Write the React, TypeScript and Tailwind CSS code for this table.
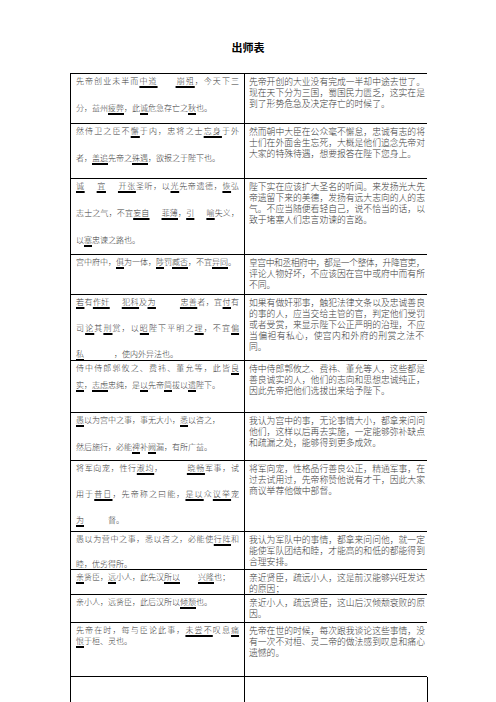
import React from "react";

type Seg = { t: string; u?: boolean; g?: number };

// "[..]" = underlined blank, "~" = one gap unit, leading "=" = justified line
const parse = (s: string): Seg[] => {
  const segs: Seg[] = [];
  const re = /\[([^\]]+)\]|(~+)|([^[~]+)/g;
  let m: RegExpExecArray | null;
  while ((m = re.exec(s))) {
    if (m[1]) segs.push({ t: m[1], u: true });
    else if (m[2]) segs.push({ t: "", g: m[2].length });
    else segs.push({ t: m[3] });
  }
  return segs;
};

type Row = { h: number; lp: number; left: string[]; right: string[] };

const rows: Row[] = [
  {
    h: 50,
    lp: 27,
    left: ["=先帝创业未半而[中道]~~~[崩殂]，今天下三", "分，益州[疲弊]，此[诚]危急存亡之[秋]也。"],
    right: [
      "=先帝开创的大业没有完成一半却中途去世了。",
      "=现在天下分为三国，蜀国民力匮乏，这实在是",
      "到了形势危急及决定存亡的时候了。",
    ],
  },
  {
    h: 55,
    lp: 27,
    left: ["=然侍卫之臣不[懈]于内，忠将之士[忘身]于外", "者，[盖追]先帝之[殊遇]，欲报之于陛下也。"],
    right: [
      "=然而朝中大臣在公众毫不懈怠，忠诚有志的将",
      "=士们在外面舍生忘死，大概是他们追念先帝对",
      "大家的特殊待遇，想要报答在陛下您身上。",
    ],
  },
  {
    h: 76,
    lp: 27,
    left: [
      "=[诚]~~[宜]~~[开张]圣听，以[光]先帝遗德，[恢]弘",
      "=志士之气，不宜[妄自]~~[菲薄]，[引]~~[喻]失义，",
      "以[塞]忠谏之路也。",
    ],
    right: [
      "=陛下实在应该扩大圣名的听闻。来发扬光大先",
      "=帝遗留下来的美德，发扬有远大志向的人的志",
      "=气。不应当随便看轻自己，说不恰当的话，以",
      "致于堵塞人们忠言劝谏的言路。",
    ],
  },
  {
    h: 40,
    lp: 27,
    left: ["宫中府中，[俱]为一体，[陟]罚[臧否]，不宜[异同]。"],
    right: [
      "!皇宫中和丞相府中，都是一个整体，升降官吏，",
      "=评论人物好坏，不应该因在宫中或府中而有所",
      "不同。",
    ],
  },
  {
    h: 66,
    lp: 26,
    left: [
      "=[若]有[作奸]~~[犯科]及[为]~~~~[忠善]者，宜[付]有",
      "=司[论]其[刑]赏，以[昭]陛下平明之[理]，不宜[偏]",
      "[私]~~~~~，使内外异法也。",
    ],
    right: [
      "=如果有做奸邪事，触犯法律文条以及忠诚善良",
      "=的事的人，应当交给主管的官，判定他们受罚",
      "=或者受赏，来显示陛下公正严明的治理，不应",
      "=当偏袒有私心，使宫内和外府的刑赏之法不",
      "同。",
    ],
  },
  {
    h: 52,
    lp: 17,
    left: ["=侍中侍郎郭攸之、费祎、董允等，此皆[良]", "[实]，[志虑]忠纯，是[以]先帝[简]拔以[遗]陛下。"],
    right: [
      "=侍中侍郎郭攸之、费祎、董允等人，这些都是",
      "=善良诚实的人，他们的志向和思想忠诚纯正，",
      "因此先帝把他们选拔出来给予陛下。",
    ],
  },
  {
    h: 48,
    lp: 27,
    left: ["[愚]以为宫中之事，事无大小，[悉]以咨之，", "然后施行，必能[裨]补[阙]漏，有所广益。"],
    right: [
      "=我认为宫中的事，无论事情大小，都拿来问问",
      "=他们，这样以后再去实施，一定能够弥补缺点",
      "和疏漏之处，能够得到更多成效。",
    ],
  },
  {
    h: 71,
    lp: 26,
    left: [
      "=将军向宠，性行[淑均]，~~~~[晓畅]军事，试",
      "=用于[昔日]，先帝称之曰能，[是以]众[议举]宠",
      "[为]~~~~督。",
    ],
    right: [
      "=将军向宠，性格品行善良公正，精通军事，在",
      "=过去试用过，先帝称赞他说有才干，因此大家",
      "商议举荐他做中部督。",
    ],
  },
  {
    h: 38,
    lp: 25,
    left: ["=愚以为营中之事，悉以咨之，必能使[行阵]和", "睦，优劣得所。"],
    right: [
      "=我认为军队中的事情，都拿来问问他，就一定",
      "=能使军队团结和睦，才能高的和低的都能得到",
      "合理安排。",
    ],
  },
  {
    h: 25,
    lp: 12,
    left: ["[亲]贤臣，[远]小人，此先汉[所以]~~~[兴隆]也；"],
    right: ["=亲近贤臣，疏远小人，这是前汉能够兴旺发达", "的原因；"],
  },
  {
    h: 28,
    lp: 12,
    left: ["亲小人，远贤臣，此后汉所以[倾颓]也。"],
    right: ["=亲近小人，疏远贤臣，这山后汉倾颓衰败的原", "因。"],
  },
  {
    h: 54,
    lp: 11,
    left: ["=先帝在时，每与臣论此事，[未尝不]叹息[痛]", "[恨]于桓、灵也。"],
    right: [
      "=先帝在世的时候，每次跟我谈论这些事情，没",
      "=有一次不对桓、灵二帝的做法感到叹息和痛心",
      "遗憾的。",
    ],
  },
];

const Segs = ({ text }: { text: string }) => (
  <>
    {parse(text).map((s, i) =>
      s.g ? (
        <span key={i} className="inline-block" style={{ width: s.g * 6 }} />
      ) : s.u ? (
        <span
          key={i}
          className="underline decoration-black decoration-2 underline-offset-[2px]"
        >
          {s.t}
        </span>
      ) : (
        <span key={i}>{s.t}</span>
      )
    )}
  </>
);

const LeftLine = ({ text, lp, last }: { text: string; lp: number; last: boolean }) => {
  const justify = text.startsWith("=");
  const body = justify ? text.slice(1) : text;
  return (
    <div
      className={`whitespace-nowrap leading-[11px] ${
        justify ? "text-justify [text-align-last:justify]" : ""
      }`}
      style={{ height: last ? 11 : lp }}
    >
      <Segs text={body} />
    </div>
  );
};

const RightLine = ({ text }: { text: string }) => {
  const justify = text.startsWith("=");
  const tight = text.startsWith("!");
  const body = justify || tight ? text.slice(1) : text;
  return (
    <div
      className={`h-[11px] whitespace-nowrap leading-[11px] ${
        justify ? "text-justify [text-align-last:justify]" : ""
      } ${tight ? "tracking-[-0.45px]" : ""}`}
    >
      {body}
    </div>
  );
};

export default function App() {
  return (
    <div
      className="h-[702px] w-[496px] overflow-hidden bg-white font-light text-[#3a3a3a]"
      style={{ fontFamily: '"Noto Sans CJK SC", "Noto Sans", sans-serif' }}
    >
      <h1 className="pt-[40px] text-center text-[11px] font-bold leading-[14px] text-black">
        出师表
      </h1>

      <div className="ml-[70px] mt-[19px] w-[357px] border-l border-t border-black">
        {rows.map((row, i) => (
          <div
            key={i}
            className="grid grid-cols-[174px_183px] overflow-hidden"
            style={{ height: row.h }}
          >
            <div className="min-h-0 border-b border-r border-black px-[5px] pt-[1px] text-[8px]">
              {row.left.map((l, j) => (
                <LeftLine key={j} text={l} lp={row.lp} last={j === row.left.length - 1} />
              ))}
            </div>
            <div className="min-h-0 border-b border-r border-black pl-[4px] pr-[3px] pt-[2px] text-[8.8px]">
              {row.right.map((l, j) => (
                <RightLine key={j} text={l} />
              ))}
            </div>
          </div>
        ))}
        <div className="grid h-[60px] grid-cols-[174px_183px]">
          <div className="border-r border-black" />
          <div className="border-r border-black" />
        </div>
      </div>
    </div>
  );
}
